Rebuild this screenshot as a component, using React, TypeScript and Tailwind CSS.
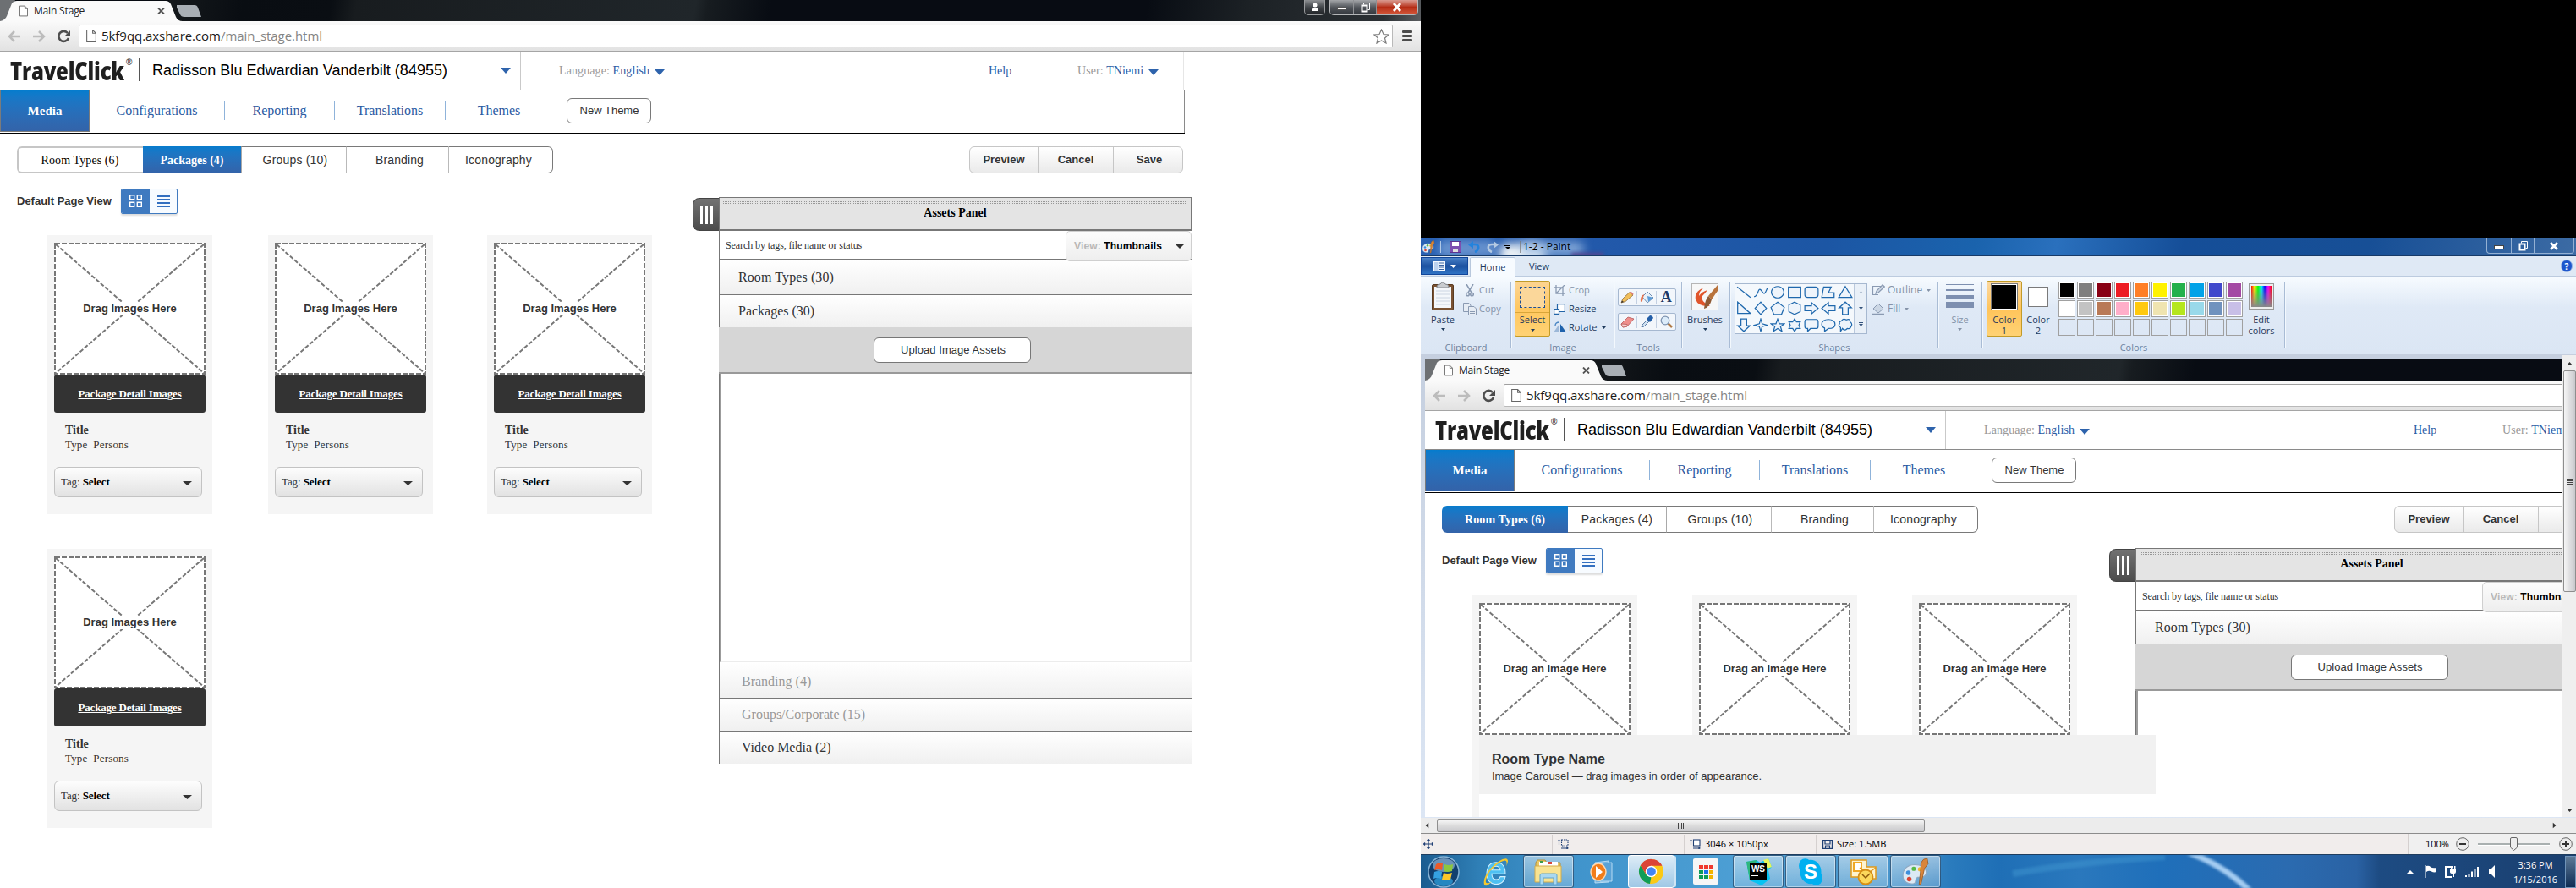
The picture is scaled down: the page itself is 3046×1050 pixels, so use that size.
import type { ReactNode } from 'react';

const serif = "font-['Liberation_Serif',serif]";
const arial = "font-['Liberation_Sans',sans-serif]";
const ui = "font-['Open_Sans',sans-serif]";

function Down({ className }: { className: string }) {
  return (
    <svg viewBox="0 0 10 6" preserveAspectRatio="none" className={`shrink-0 ${className}`}>
      <path d="M0 0H10L5 6Z" fill="currentColor" />
    </svg>
  );
}

function PageIcon({ className }: { className: string }) {
  return (
    <svg viewBox="0 0 11 14" className={className} fill="#fff" stroke="#666" strokeWidth="1">
      <path d="M.5.5H7L10.500 4V13.500H.5Z" />
      <path d="M7 .5V4H10.500" fill="none" />
    </svg>
  );
}

/* ---------- Browser window ---------- */

function WindowButtons() {
  return (
    <div className="absolute left-[1542px] top-0 flex gap-[5px]">
      <div className="flex h-[18px] w-[25px] items-center justify-center rounded-b-[5px] border border-t-0 border-[#9a9c9e] bg-linear-to-b from-[#8d9093] via-[#43474b] via-50% to-[#202327]">
        <svg width="12" height="11" viewBox="0 0 12 11" fill="#fff">
          <circle cx="6" cy="3" r="2.500" />
          <path d="M2 10V8Q2 6 4.500 6H7.500Q10 6 10 8V10Z" />
        </svg>
      </div>
      <div className="flex h-[18px] w-[105px] overflow-hidden rounded-b-[5px] border border-t-0 border-[#b4b6b8]">
        <div className="flex w-[28px] items-end justify-center border-r border-[#8e9093] bg-linear-to-b from-[#a4a6a9] via-[#54585d] via-50% to-[#33373d] pb-[5px]">
          <div className="h-1 w-[11px] border border-[#555] bg-white" />
        </div>
        <div className="flex w-[27px] items-center justify-center border-r border-[#8e9093] bg-linear-to-b from-[#a4a6a9] via-[#54585d] via-50% to-[#33373d]">
          <svg width="13" height="12" viewBox="0 0 13 12" fill="none" stroke="#fff">
            <path d="M4.500 2.500V.5H11.500V8.500H9.500" />
            <rect x="2.500" y="3.500" width="6" height="7" strokeWidth="2" />
          </svg>
        </div>
        <div className="flex flex-1 items-center justify-center bg-linear-to-b from-[#d99a90] via-[#b52c14] via-50% to-[#d4573a]">
          <svg width="14" height="11" viewBox="0 0 14 11" stroke="#fff" strokeWidth="2.800">
            <path d="M3 1L11 10M11 1L3 10" />
          </svg>
        </div>
      </div>
    </div>
  );
}

function BrowserChrome() {
  return (
    <>
      <div className="relative h-[25px] w-[1680px] bg-[#070b11]">
        <div className="absolute inset-y-0 left-[200px] right-0 bg-[linear-gradient(100deg,#15191c_0%,#090d12_6%,#0a0e13_13%,#181c1f_15%,#20262a_42%,#171c20_43%,#080c13_48%,#080c13_78%,#1c2125_86%,#2b3034_97%,#5a5d60_100%)]" />
        <svg width="250" height="25" viewBox="0 0 250 25" className="absolute left-0 top-0">
          <path d="M0 0H18L8 20Q6 25 0 25Z" fill="#6d7073" />
          <path d="M0 25Q6 24 8 19L14 4Q16 1 20 1H196Q200 1 202 5L208 20Q210 25 216 25Z" fill="#fafafa" />
          <path d="M209 6H230Q233 6 234 9L238 20H218Q214 20 213 17L209 9Z" fill="#a9afb5" />
        </svg>
        <div className="relative flex h-[25px] items-center pl-[23px]">
          <PageIcon className="h-[14px] w-[10px]" />
          <span className={`${ui} ml-[7px] text-[12px] tracking-[-0.17px] text-[#222]`}>Main Stage</span>
          <svg width="9" height="8" viewBox="0 0 9 8" className="ml-[86px]" stroke="#555" strokeWidth="1.800">
            <path d="M1 .5L8 7.500M8 .5L1 7.500" />
          </svg>
        </div>
        <WindowButtons />
      </div>
      <div className="flex h-[36px] w-[1680px] items-center border-b border-[#a5a5a5] bg-linear-to-b from-[#fafafa] to-[#e2e2e2]">
        <svg width="76" height="18" viewBox="0 0 76 18" className="ml-[9px] mr-[8px]" fill="none">
          <path d="M15 9H2M8 3L2 9L8 15" stroke="#bcbcbc" strokeWidth="2.500" />
          <path d="M30 9H43M37 3L43 9L37 15" stroke="#bcbcbc" strokeWidth="2.500" />
          <path d="M71 5A6 6 0 1 0 72 11" stroke="#4d4d4d" strokeWidth="2.600" />
          <path d="M74 2V9H67Z" fill="#4d4d4d" />
        </svg>
        <div className="flex h-[27px] w-[1554px] items-center rounded-[2px] border border-[#b9b9b9] border-t-[#9f9f9f] bg-white pl-[8px] pr-[3px]">
          <PageIcon className="h-[15px] w-[12px]" />
          <span className={`${ui} ml-[6px] flex-1 text-[15px] tracking-[-0.05px] text-[#858585]`}>
            <span className="text-[#1a1a1a]">5kf9qq.axshare.com</span>/main_stage.html
          </span>
          <svg width="19" height="18" viewBox="0 0 19 18" fill="#fff" stroke="#7d7d7d" strokeWidth="1.200">
            <path d="M9.500 1L12 6.500L18 7L13.500 11L15 17L9.500 14L4 17L5.500 11L1 7L7 6.500Z" />
          </svg>
        </div>
        <div className="ml-[11px] flex flex-col gap-[2px]">
          <div className="h-[3px] w-[12px] rounded-[1px] bg-[#4c4c4c]" />
          <div className="h-[3px] w-[12px] rounded-[1px] bg-[#4c4c4c]" />
          <div className="h-[3px] w-[12px] rounded-[1px] bg-[#4c4c4c]" />
        </div>
      </div>
    </>
  );
}

/* ---------- Site header and navigation ---------- */

function SiteHeader() {
  return (
    <div className="flex h-[46px] w-[1400px] items-center border-b border-r border-b-[#8a8a8a] border-r-[#e6e6e6] bg-white">
      <div className={`${ui} ml-[12px] w-[138px] origin-left scale-x-[.8] text-[30px] leading-[45px] font-extrabold tracking-[-0.3px] whitespace-nowrap text-[#1f1f1f]`}>
        TravelClick
      </div>
      <span className={`${arial} -mt-[20px] -ml-[1px] w-[8px] text-[10px] font-bold text-[#333]`}>®</span>
      <div className="-mt-[3px] ml-[7px] h-[27px] w-px bg-[#555]" />
      <div className={`${arial} ml-[15px] w-[400px] text-[18px] tracking-[0.03px] whitespace-nowrap text-black`}>
        Radisson Blu Edwardian Vanderbilt (84955)
      </div>
      <div className="flex h-[45px] w-[36px] items-center justify-center border-x border-[#c9c9c9] text-[#2e63ac]">
        <Down className="h-[7px] w-[12px]" />
      </div>
      <div className={`${serif} ml-[45px] flex w-[508px] items-center text-[14px] tracking-[0.1px]`}>
        <span className="whitespace-pre text-[#999]">Language: </span>
        <span className="text-[#2c5ba3]">English</span>
        <Down className="mt-[3px] ml-[6px] h-[7px] w-[12px] text-[#2e63ac]" />
      </div>
      <span className={`${serif} w-[105px] text-[14px] text-[#2c5ba3]`}>Help</span>
      <div className={`${serif} flex items-center text-[14px] tracking-[0.07px]`}>
        <span className="whitespace-pre text-[#999]">User: </span>
        <span className="text-[#2c5ba3]">TNiemi</span>
        <Down className="mt-[3px] ml-[6px] h-[7px] w-[12px] text-[#2e63ac]" />
      </div>
    </div>
  );
}

function MainNav() {
  return (
    <div className="flex h-[51px] w-[1401px] border-b border-black bg-white">
      <div className={`${serif} flex h-[50px] w-[1401px] items-center border-r border-[#8a8a8a] pb-[3px] text-[16px] text-[#2c5ba3]`}>
        <div className="flex h-[49px] w-[106px] items-center justify-center self-start border border-t-0 border-[#7b7b7b] bg-linear-to-b from-[#057ccd] to-[#3363a9] text-[15px] font-bold text-white">
          Media
        </div>
        <div className="flex h-[23px] w-[160px] items-center justify-center border-r border-[#8fb3da]">Configurations</div>
        <div className="flex h-[23px] w-[130px] items-center justify-center border-r border-[#8fb3da]">Reporting</div>
        <div className="flex h-[23px] w-[131px] items-center justify-center border-r border-[#8fb3da]">Translations</div>
        <div className="flex h-[23px] w-[126px] items-center justify-center">Themes</div>
        <div className={`${arial} ml-[17px] flex h-[30px] w-[100px] items-center justify-center rounded-[6px] border border-[#797979] pl-px text-[13px] text-[#333]`}>
          New Theme
        </div>
      </div>
    </div>
  );
}

function Toolbar({ active }: { active: 'rooms' | 'packages' }) {
  const rooms = active === 'rooms';
  return (
    <div className="flex h-[64px] w-[1400px] items-start pt-[15px] pl-[20px]">
      <div className={`${arial} flex h-[32px] w-[634px] text-[14px] text-[#333]`}>
        {rooms ? (
          <div className={`${serif} flex w-[149px] items-center justify-center rounded-l-[6px] bg-linear-to-b from-[#057ccd] to-[#3363a9] text-[14px] font-bold tracking-[0.1px] text-white`}>
            Room Types (6)
          </div>
        ) : (
          <div className={`${serif} flex w-[149px] items-center justify-center rounded-l-[6px] border-y-2 border-l-2 border-[#c6c6c6] pr-[2px] text-[14px] tracking-[0.1px] text-black`}>
            Room Types (6)
          </div>
        )}
        {rooms ? (
          <div className="flex w-[116px] items-center justify-center border-y border-y-[#797979] tracking-[0.15px]">Packages (4)</div>
        ) : (
          <div className={`${serif} flex w-[116px] items-center justify-center bg-linear-to-b from-[#057ccd] to-[#3363a9] text-[14px] font-bold text-white`}>
            Packages (4)
          </div>
        )}
        <div className="flex w-[124px] items-center justify-center border-y border-l border-y-[#797979] border-l-[#a9a9a9] pl-[3px] tracking-[0.2px]">Groups (10)</div>
        <div className="flex w-[121px] items-center justify-center border-y border-l border-y-[#797979] border-l-[#b9b9b9] pl-[5px] tracking-[0.12px]">Branding</div>
        <div className="flex w-[124px] items-center justify-center rounded-r-[6px] border border-[#797979] border-l-[#b9b9b9] pr-[5px] tracking-[0.18px]">Iconography</div>
      </div>
      <div className={`${arial} ml-[492px] flex h-[32px] w-[253px] rounded-[6px] border-[1.500px] border-[#c6c6c6] bg-linear-to-b from-white to-[#eaeaea] text-[13px] font-bold text-[#333]`}>
        <div className="flex w-[81px] items-center justify-center border-r border-[#c6c6c6]">Preview</div>
        <div className="flex w-[89px] items-center justify-center border-r border-[#c6c6c6]">Cancel</div>
        <div className="flex flex-1 items-center justify-center pl-[3px]">Save</div>
      </div>
    </div>
  );
}

function ViewToggle() {
  return (
    <div className="flex h-[31px] items-center pl-[20px]">
      <span className={`${arial} w-[123px] text-[13px] font-bold text-[#333]`}>Default Page View</span>
      <div className="flex h-[30px] w-[67px] overflow-hidden rounded-[2px] border border-[#3f7ac0] bg-[#f7fbff] shadow-[0_2px_2px_#ddd]">
        <div className="flex w-[33px] items-center justify-center bg-[#3f7ac0]">
          <svg width="15" height="15" viewBox="0 0 15 15" fill="none" stroke="#fff" strokeWidth="1.400">
            <path d="M.7.7H5.700V5.700H.7ZM9.300.7H14.300V5.700H9.300ZM.7 9.300H5.700V14.300H.7ZM9.300 9.300H14.300V14.300H9.300Z" />
          </svg>
        </div>
        <div className="flex flex-1 items-center justify-center">
          <svg width="15" height="15" viewBox="0 0 15 15" stroke="#3470c0" strokeWidth="2">
            <path d="M0 2H15M0 6H15M0 10H15M0 14H15" />
          </svg>
        </div>
      </div>
    </div>
  );
}

/* ---------- Cards ---------- */

function DropZone({ label }: { label: string }) {
  return (
    <div className={`${arial} relative grid h-[156px] w-[179px] place-items-center bg-white`}>
      <svg width="179" height="156" viewBox="0 0 179 156" className="col-start-1 row-start-1" stroke="#777" fill="none">
        <rect x="1" y="1" width="177" height="154" strokeWidth="2" strokeDasharray="6 2" shapeRendering="crispEdges" />
        <path d="M2 2L177 154M177 2L2 154" strokeWidth="2" strokeDasharray="5 2" />
      </svg>
      <span className="relative col-start-1 row-start-1 bg-white px-[2px] text-[13px] leading-4 font-bold text-[#333]">{label}</span>
    </div>
  );
}

function PackageCard() {
  return (
    <div className="h-[330px] w-[195px] bg-[#f5f5f5] px-[8px] pt-[9px]">
      <DropZone label="Drag Images Here" />
      <div className={`${serif} flex h-[45px] w-[179px] items-center justify-center rounded-[3px] bg-[#333] text-[13px] font-bold tracking-[-0.17px] text-white underline`}>
        Package Detail Images
      </div>
      <div className={`${serif} px-[13px] pt-[12px] text-[#333]`}>
        <div className="text-[14px] leading-[17px] font-bold">Title</div>
        <div className="text-[13px] leading-[17px] tracking-[0.17px] whitespace-pre">Type  Persons</div>
      </div>
      <div className={`${serif} mt-[18px] flex h-[36px] w-[175px] items-center rounded-[6px] border-[1.500px] border-[#c3c3c3] bg-linear-to-b from-[#fdfdfd] to-[#e2e2e2] pl-[7px] text-[13px] tracking-[-0.09px] text-[#333]`}>
        <span className="flex-1">
          Tag: <b className="text-black">Select</b>
        </span>
        <Down className="mt-[2px] mr-[11px] h-[5px] w-[11px]" />
      </div>
    </div>
  );
}

/* ---------- Assets panel ---------- */

function AssetRow({ label, muted, className }: { label: string; muted?: boolean; className: string }) {
  return (
    <div className={`${serif} flex items-center bg-linear-to-b from-white to-[#f0f0f0] text-[16px] ${muted ? 'text-[#999]' : 'text-[#333]'} ${className}`}>
      {label}
    </div>
  );
}

function AssetsPanel({ full }: { full: boolean }) {
  return (
    <div className="flex">
      <div className="mt-px flex h-[39px] w-[31px] items-center justify-center gap-[3px] rounded-l-[8px] border border-r-0 border-[#444] bg-linear-to-b from-[#727272] to-[#4c4c4c]">
        <div className="h-[22px] w-[3px] bg-white" />
        <div className="h-[22px] w-[3px] bg-white" />
        <div className="h-[22px] w-[3px] bg-white" />
      </div>
      <div className="w-[559px] border-l border-[#777]">
        <div className={`${serif} flex h-[40px] flex-col items-center border-t border-r border-b-2 border-[#777] bg-[#e4e4e4] text-[14px] font-bold text-black`}>
          <div className="mt-[4px] mb-px h-[3px] w-[550px] bg-[linear-gradient(transparent_1px,#e4e4e4_1px_2px,transparent_2px),repeating-linear-gradient(90deg,#979797_0_1px,transparent_1px_2px)]" />
          <div className="leading-[20px]">Assets Panel</div>
        </div>
        <div className="flex h-[34px] items-start border-b border-[#777] bg-white">
          <span className={`${serif} w-[409px] pl-[7px] text-[12px] leading-[34px] tracking-[-0.09px] text-[#333]`}>
            Search by tags, file name or status
          </span>
          <div className={`${arial} relative flex h-[36px] w-[149px] items-center rounded-[5px] border-[1.500px] border-[#cfcfcf] bg-linear-to-b from-[#fcfcfc] to-[#eeeeee] pl-[9px] text-[12px] font-bold tracking-[0.14px] text-[#b8b8b8]`}>
            <span className="flex-1">
              View: <span className="text-black">Thumbnails</span>
            </span>
            <Down className="mr-[8px] h-[5px] w-[10px] text-[#333]" />
          </div>
        </div>
        <AssetRow label="Room Types (30)" className={full ? 'h-[42px] border-b border-b-[#777] pl-[22px] tracking-[0.1px]' : 'h-[40px] pl-[22px] tracking-[0.1px]'} />
        {full && <AssetRow label="Packages (30)" className="h-[38px] pl-[22px]" />}
        <div className="-ml-px flex h-[55px] justify-center border-b-2 border-[#999] bg-[#d6d6d6] pt-[12px]">
          <div className={`${arial} flex h-[30px] w-[186px] items-center justify-center rounded-[6px] border border-[#777] bg-white pl-[2px] text-[13px] tracking-[0.06px] text-[#333] ${full ? '-ml-[7px]' : '-ml-[6px]'}`}>
            Upload Image Assets
          </div>
        </div>
        <div className="h-[341px] border-r-2 border-b-2 border-l-2 border-[#ececec] border-l-[#9c9c9c] bg-white" />
        {full && (
          <>
            <AssetRow muted label="Branding (4)" className="h-[43px] border-b border-b-[#777] pt-[4px] pl-[26px]" />
            <AssetRow muted label="Groups/Corporate (15)" className="h-[39px] border-b border-b-[#777] pl-[26px]" />
            <AssetRow label="Video Media (2)" className="h-[38px] pl-[26px]" />
          </>
        )}
      </div>
    </div>
  );
}

function PackagesPage() {
  return (
    <div className="h-[1050px] w-[1680px] overflow-hidden bg-white">
      <BrowserChrome />
      <SiteHeader />
      <MainNav />
      <Toolbar active="packages" />
      <div className="flex">
        <div className="w-[819px]">
          <ViewToggle />
          <div className="mt-[25px] grid grid-cols-[261px_259px_195px] gap-y-[41px] pl-[56px]">
            <PackageCard />
            <PackageCard />
            <PackageCard />
            <PackageCard />
          </div>
        </div>
        <div className="pt-[11px]">
          <AssetsPanel full />
        </div>
      </div>
    </div>
  );
}

function RoomTypesPage() {
  return (
    <div className="h-[541px] w-[1344px] overflow-hidden bg-white">
      <div className="w-[1680px]">
        <BrowserChrome />
        <SiteHeader />
        <MainNav />
        <Toolbar active="rooms" />
        <div className="flex">
          <div className="w-[809px]">
            <ViewToggle />
            <div className="mt-[25px] flex gap-[65px] pl-[56px]">
              <div className="h-[300px] w-[195px] bg-[#f5f5f5] px-[8px] pt-[10px]"><DropZone label="Drag an Image Here" /></div>
              <div className="h-[300px] w-[195px] bg-[#f5f5f5] px-[8px] pt-[10px]"><DropZone label="Drag an Image Here" /></div>
              <div className="h-[300px] w-[195px] bg-[#f5f5f5] px-[8px] pt-[10px]"><DropZone label="Drag an Image Here" /></div>
            </div>
            <div className={`${arial} relative -mt-[134px] ml-[64px] h-[140px] w-[1260px] bg-white text-[#333]`}>
              <div className="h-[70px] w-[800px] bg-[#f1f1f1] pt-[19px] pl-[15px]">
                <div className="text-[16px] leading-[20px] font-bold">Room Type Name</div>
                <div className="text-[13px] leading-[20px] tracking-[-0.05px]">Image Carousel — drag images in order of appearance.</div>
              </div>
            </div>
          </div>
          <div className="pt-px">
            <AssetsPanel full={false} />
          </div>
        </div>
      </div>
    </div>
  );
}

/* ---------- Paint ---------- */

function PaletteIcon({ className }: { className: string }) {
  return (
    <svg viewBox="0 0 32 32" className={className}>
      <path d="M15 8C6 8 2 14 2 20C2 27 8 30 14 29C18 28 14 24 18 22C22 21 27 23 28 17C28 11 22 8 15 8Z" fill="#dce9f4" stroke="#8fa9c2" />
      <circle cx="8" cy="17" r="2.600" fill="#3f8fdc" />
      <circle cx="14" cy="12.500" r="2.400" fill="#57b847" />
      <circle cx="21" cy="13" r="2.400" fill="#f2b632" />
      <circle cx="9" cy="24" r="2.600" fill="#dd4433" />
      <path d="M25 2L29 1L30 7L26 12L22 30L20 30L22 11L22 6Z" fill="#d9853a" stroke="#9a5a22" strokeWidth=".8" />
    </svg>
  );
}

function TitleBar() {
  return (
    <div className="relative flex h-[21px] items-center overflow-hidden border-b border-[#173a68] bg-[linear-gradient(100deg,#2a62b4_0%,#2359ab_12%,#1c56a4_35%,#1a63ad_48%,#2a70bd_55%,#154e98_66%,#174f96_82%,#3c6ba4_100%)]">
      <div className="absolute left-[92px] top-[6px] h-6 w-[56px] rounded-full bg-[#eef3f6] blur-[6px]" />
      <div className="absolute left-[20px] top-[2px] h-5 w-[70px] rounded-full bg-[#8db0e0]/60 blur-[5px]" />
      <div className="absolute left-[118px] top-[4px] h-4 w-[75px] rounded-full bg-[#9bbce3]/80 blur-[6px]" />
      <div className="absolute left-[178px] top-[17px] h-2 w-[38px] bg-[#55458f] blur-[2px]" />
      <div className="absolute inset-x-0 bottom-0 h-px bg-[#8fb3dd]" />
      <PaletteIcon className="relative ml-px h-[16px] w-[16px]" />
      <div className="relative ml-[6px] h-[14px] w-px bg-[#dce8f5]/70" />
      <svg viewBox="0 0 14 14" className="relative ml-[10px] h-[14px] w-[14px]">
        <path d="M.5.5H13.500V13.500H.5Z" fill="#7d4fb0" stroke="#5b3590" />
        <path d="M3 1H11V6H3Z" fill="#fff" />
        <path d="M4 9H10V13H4Z" fill="#ddd" />
      </svg>
      <svg viewBox="0 0 38 14" className="relative ml-[8px] h-[14px] w-[38px]" fill="none" strokeWidth="2.600">
        <path d="M4 4H8Q13 4 12 9Q11 12 8 13" stroke="#2383dd" />
        <path d="M6 0L0 4.500L6 9Z" fill="#2383dd" />
        <path d="M32 4H28Q23 4 24 9Q25 12 28 13" stroke="#b4c9e2" />
        <path d="M30 0L36 4.500L30 9Z" fill="#b4c9e2" />
      </svg>
      <div className="relative ml-[5px] flex flex-col items-center gap-px text-black">
        <div className="h-px w-[7px] bg-black" />
        <Down className="h-[3px] w-[6px]" />
      </div>
      <div className="relative ml-[11px] h-[14px] w-px bg-[#777]/70" />
      <span className={`${ui} relative ml-[3px] text-[12px] leading-[20px] text-black`}>1-2 - Paint</span>
      <div className="absolute right-[2px] top-0 flex h-[18px] w-[104px] rounded-b-[4px] border border-t-0 border-[#93b0d3]">
        <div className="flex w-[29px] items-end justify-center border-r border-[#93b0d3] pb-[4px]">
          <div className="h-[5px] w-[12px] border border-[#444] bg-white" />
        </div>
        <div className="flex w-[27px] items-center justify-center border-r border-[#93b0d3]">
          <svg width="13" height="12" viewBox="0 0 13 12" fill="none" stroke="#fff">
            <path d="M4.500 2.500V.5H11.500V8.500H9.500" />
            <rect x="2.500" y="3.500" width="6" height="7" strokeWidth="2" />
          </svg>
        </div>
        <div className="flex flex-1 items-center justify-center">
          <svg width="12" height="10" viewBox="0 0 12 10" stroke="#fff" strokeWidth="2.600">
            <path d="M2 1L10 9M10 1L2 9" />
          </svg>
        </div>
      </div>
    </div>
  );
}

function RibbonTabs() {
  return (
    <div className={`${ui} flex h-[24px] items-end border-b border-[#bccbdf] bg-[#dfe9f5] text-[11px] text-[#1e395b]`}>
      <div className="mb-px flex h-[21px] w-[56px] items-center justify-center gap-[6px] border border-[#12469a] bg-linear-to-b from-[#4a82c8] via-[#1c51a0] via-50% to-[#2f73c4] text-white">
        <svg width="14" height="12" viewBox="0 0 14 12">
          <rect width="14" height="12" fill="#f3f8ff" />
          <path d="M7 2H13M7 4.500H13M7 7H13M7 9.500H13" stroke="#3b64a2" strokeWidth="1.200" />
          <rect x="1" y="1" width="4.500" height="10" fill="#bcd2ef" />
        </svg>
        <Down className="h-[4px] w-[7px]" />
      </div>
      <div className="-mb-px ml-[2px] flex h-[23px] w-[54px] items-center justify-center rounded-t-[2px] border border-b-0 border-[#b8c8dd] bg-[#f7fbff] tracking-[-0.2px]">Home</div>
      <div className="ml-[16px] flex h-[22px] items-center">View</div>
      <div className="mr-[4px] mb-[4px] ml-auto flex h-[15px] w-[14px] items-center justify-center rounded-full border border-[#9bb9e8] bg-[#1d56cc] text-[10px] leading-none font-bold text-white">?</div>
    </div>
  );
}

function Group({ label, className, children }: { label?: string; className: string; children?: ReactNode }) {
  return (
    <div className={`relative flex h-[84px] flex-col justify-between ${className}`}>
      <div className="flex h-[66px] items-start">{children}</div>
      <div className="flex h-[12px] items-center justify-center leading-none text-[#6f83a0]">{label}</div>
      <div className="absolute right-0 top-[2px] h-[77px] w-px bg-[#a9bcd5] shadow-[1px_0_0_#f3f8fd]" />
    </div>
  );
}

function SmallItem({ icon, label, arrow, dim }: { icon: ReactNode; label: string; arrow?: boolean; dim?: boolean }) {
  return (
    <div className={`flex h-[22px] items-center ${dim ? 'text-[#8593a8]' : 'text-[#1e395b]'}`}>
      <div className="mr-[3px] flex w-[16px] justify-center">{icon}</div>
      {label}
      {arrow && <Down className="ml-[5px] h-[3px] w-[5px]" />}
    </div>
  );
}

const shapePaths = [
  'M1 2L15 13', 'M1 12C5 13 5 2 8 5S11 13 15 3', 'M8 1.500A6.500 6 0 1 0 8.010 1.500Z', 'M1.500 2H14.500V13H1.500Z', 'M4 2H12Q15 2 15 5V10Q15 13 12 13H4Q1 13 1 10V5Q1 2 4 2Z', 'M3 2H11L8 8H14V13H1Z', 'M8 1.500L15 13H1Z',
  'M1.500 1V13H15Z', 'M8 1L14 7.500L8 14L2 7.500Z', 'M8 1L15 6.500L12 14H4L1 6.500Z', 'M8 1L14 4V11L8 14L2 11V4Z', 'M1 5H8V1.500L15 7.500L8 13.500V10H1Z', 'M15 5H8V1.500L1 7.500L8 13.500V10H15Z', 'M5 14V7H1.500L8 1L14.500 7H11V14Z',
  'M5 1V8H1.500L8 14L14.500 8H11V1Z', 'M8 1L9.500 6L14.500 7.500L9.500 9L8 14L6.500 9L1.500 7.500L6.500 6Z', 'M8 1L9.800 6H15L11 9L12.500 14L8 11L3.500 14L5 9L1 6H6.200Z', 'M8 1L10 4H14L12.500 7.500L14 11H10L8 14L6 11H2L3.500 7.500L2 4H6Z', 'M3 1.500H13Q15 1.500 15 4V8.500Q15 11 13 11H7L4 14V11H3Q1 11 1 8.500V4Q1 1.500 3 1.500Z', 'M8 1.500C12 1.500 15 3.500 15 6.500S12 11 8 11L4 14V10.500C2 9.500 1 8 1 6.500C1 3.500 4 1.500 8 1.500Z', 'M4 3Q6 0 9 2Q13 0 13 4Q16 6 14 9Q13 12 10 11Q7 14 5 11L3 14V10Q0 8 2 6Q1 4 4 3Z',
];

const swatches = [
  'bg-black', 'bg-[#7f7f7f]', 'bg-[#880015]', 'bg-[#ed1c24]', 'bg-[#ff7f27]', 'bg-[#fff200]', 'bg-[#22b14c]', 'bg-[#00a2e8]', 'bg-[#3f48cc]', 'bg-[#a349a4]',
  'bg-white', 'bg-[#c3c3c3]', 'bg-[#b97a57]', 'bg-[#ffaec9]', 'bg-[#ffc90e]', 'bg-[#efe4b0]', 'bg-[#b5e61d]', 'bg-[#99d9ea]', 'bg-[#7092be]', 'bg-[#c8bfe7]',
  '', '', '', '', '', '', '', '', '', '',
];

function ToolStrip({ children }: { children: ReactNode }) {
  return <div className="flex h-[21px] w-[69px] items-center divide-x divide-[#c3d0e2] rounded-[2px] border border-[#a6b8d0] bg-[#f2f6fb]">{children}</div>;
}

function Ribbon() {
  return (
    <div className={`${ui} flex h-[92px] border-b border-[#93a5be] bg-linear-to-b from-[#f7fbff] via-[#dfe9f6] via-40% to-[#dbe6f4] pt-[5px] text-[11px] text-[#1e395b]`}>
      <Group label="Clipboard" className="w-[107px]">
        <div className="ml-[6px] flex w-[40px] flex-col items-center">
          <svg width="26" height="34" viewBox="0 0 26 34" className="mt-[2px]">
            <rect x=".5" y="2.500" width="25" height="30" rx="1.500" fill="#7a5232" stroke="#5a3b22" />
            <rect x="3" y="5" width="20" height="25" fill="#f4f7fb" />
            <path d="M5 10H21M5 14H21M5 18H21M5 22H21M5 26H21" stroke="#ccd5e2" />
            <path d="M6 5Q6 2 10 2Q11 0 13 0Q15 0 16 2Q20 2 20 5V6H6Z" fill="#c9ccd0" stroke="#84888e" />
          </svg>
          <span className="mt-[1px] leading-[17px]">Paste</span>
          <Down className="mt-[2px] h-[3px] w-[5px]" />
        </div>
        <div className="ml-[4px]">
          <SmallItem dim label="Cut" icon={<svg width="10" height="15" viewBox="0 0 10 15" fill="none" stroke="#8a9ab2" strokeWidth="1.500"><path d="M1 0L7 10M9 0L3 10" /><circle cx="2.500" cy="12" r="1.800" /><circle cx="7.500" cy="12" r="1.800" /></svg>} />
          <SmallItem dim label="Copy" icon={<svg width="16" height="15" viewBox="0 0 16 15" fill="#e6ecf4" stroke="#8a9ab2"><path d="M.5.5H7L9 3V10.500H.5Z" /><path d="M6.500 4.500H13L15.500 7V14.500H6.500Z" /><path d="M8 8.500H13M8 10.500H14M8 12.500H14" /></svg>} />
        </div>
      </Group>
      <Group label="Image" className="w-[122px]">
        <div className="ml-[4px] flex h-[66px] w-[42px] flex-col items-center rounded-[2px] border border-[#c29b29] bg-linear-to-b from-[#fcd491] via-[#ffc75f] via-50% to-[#ffd274]">
          <div className="flex h-[37px] w-full items-center justify-center border-b border-[#d9a63a]">
            <div className="h-[25px] w-[30px] border border-dashed border-[#1f4f93] bg-[#fbd79a]" />
          </div>
          <span className="leading-[16px]">Select</span>
          <Down className="mt-[3px] h-[3px] w-[5px]" />
        </div>
        <div className="ml-[3px]">
          <SmallItem dim label="Crop" icon={<svg width="14" height="13" viewBox="0 0 14 13" fill="none" stroke="#8a9ab2" strokeWidth="1.300"><path d="M3 0V10H14M0 3H11V13M3 10L13 0" /></svg>} />
          <SmallItem label="Resize" icon={<svg width="14" height="13" viewBox="0 0 14 13" fill="#fff" stroke="#2465a8" strokeWidth="1.200"><path d="M4.500.6H13.400V9.500H4.500Z" /><path d="M.6 6.500H6.500V12.400H.6Z" /></svg>} />
          <SmallItem arrow label="Rotate" icon={<svg width="15" height="14" viewBox="0 0 15 14"><path d="M7 3V13H0Z" fill="#9db8d8" /><path d="M8 3L15 13H8Z" fill="#1f62ac" /><path d="M2 5Q2 1 7 1" fill="none" stroke="#4a86c4" strokeWidth="1.300" /></svg>} />
        </div>
      </Group>
      <Group label="Tools" className="w-[80px]">
        <div className="mt-[9px] ml-[4px] flex flex-col gap-[8px]">
          <ToolStrip>
            <div className="flex w-[22px] justify-center"><svg width="16" height="15" viewBox="0 0 16 15"><path d="M1 14L3 9L11 1.500L15 5L6 12.500Z" fill="#f1bf5b" stroke="#8c6a3a" strokeWidth=".8" /><path d="M11 1.500L12.500.5L15.500 3.500L15 5Z" fill="#e07a7a" /><path d="M1 14L2 11.500L4 13Z" fill="#333" /></svg></div>
            <div className="flex w-[24px] justify-center"><svg width="17" height="16" viewBox="0 0 17 16"><path d="M3 7L9 1L16 8L9 14Z" fill="#e8f0f8" stroke="#6c8db4" /><path d="M9 6L16 8L10 13Z" fill="#5c9bd6" /><path d="M5 4Q0 6 1 13Q4 12 4 8Z" fill="#e5744f" /></svg></div>
            <div className={`${serif} flex w-[22px] justify-center text-[18px] leading-[19px] font-bold text-[#1b3a69]`}>A</div>
          </ToolStrip>
          <ToolStrip>
            <div className="flex w-[22px] justify-center"><svg width="17" height="14" viewBox="0 0 17 14" stroke="#b65a5a" strokeWidth=".8"><path d="M1 9L9 1L16 3L8 12L3 13Z" fill="#ee8f8c" /><path d="M1 9L8 9.500L8 12L3 13Z" fill="#f9d2cf" /></svg></div>
            <div className="flex w-[24px] justify-center"><svg width="15" height="15" viewBox="0 0 15 15"><path d="M1 14L2 11L8 5L10 7L4 13Z" fill="#cfe0f0" stroke="#5d7fa8" /><path d="M7 4L11 0Q14 0 15 3L11 8Z" fill="#235ea8" /></svg></div>
            <div className="flex w-[22px] justify-center"><svg width="15" height="15" viewBox="0 0 15 15"><path d="M9 9L14 14" stroke="#b07a45" strokeWidth="2.500" /><circle cx="6" cy="6" r="4.800" fill="#dcecfa" stroke="#7d93b0" strokeWidth="1.300" /></svg></div>
          </ToolStrip>
        </div>
      </Group>
      <Group className="w-[57px]">
        <div className="ml-[4px] flex w-[46px] flex-col items-center">
          <svg width="32" height="32" viewBox="0 0 32 32" className="mt-[3px]">
            <rect x=".5" y=".5" width="31" height="31" fill="#f7f7f7" stroke="#b5b5b5" />
            <path d="M15 5Q3 10 5 19Q8 28 22 27Q10 21 13 15Q16 12 19 8Q12 10 9 15Q9 9 15 5Z" fill="#e0552b" />
            <path d="M31 2L31 9L24 19L20 15Z" fill="#b9733c" />
            <path d="M20 15L24 19Q22 28 15 30Q16 20 20 15Z" fill="#8f5a35" />
          </svg>
          <span className="mt-[2px] leading-[17px]">Brushes</span>
          <Down className="mt-[2px] h-[3px] w-[5px]" />
        </div>
      </Group>
      <Group label="Shapes" className="w-[246px]">
        <div className="mt-[3px] ml-[5px] flex h-[60px] w-[157px] border border-[#a6b8d0] bg-[#f4f8fc]">
          <div className="grid w-[140px] grid-cols-7">
            {shapePaths.map((d) => (
              <svg key={d} width="18" height="17" viewBox="0 0 16 15" className="m-[1px]" fill="#eef4fb" stroke="#1f68ad" strokeWidth="1.100">
                <path d={d} />
              </svg>
            ))}
          </div>
          <div className="flex flex-1 flex-col items-center justify-between border-l border-[#b9c8dc] bg-[#e9f0f8] py-[8px] text-[#33527b]">
            <Down className="h-[3px] w-[5px] rotate-180 opacity-40" />
            <Down className="h-[3px] w-[5px]" />
            <div className="flex flex-col items-center gap-px"><div className="h-px w-[5px] bg-[#33527b]" /><Down className="h-[3px] w-[5px]" /></div>
          </div>
        </div>
        <div className="ml-[5px] text-[12px]">
          <SmallItem dim arrow label="Outline" icon={<svg width="16" height="14" viewBox="0 0 16 14" fill="none" stroke="#8a9ab2" strokeWidth="1.200"><path d="M11 2.500H1.500V12.500H8" /><path d="M5 11L6 8L13 .8L15.300 3L8 10Z" fill="#cfd9e6" /></svg>} />
          <SmallItem dim arrow label="Fill" icon={<svg width="16" height="14" viewBox="0 0 16 14" fill="#cbd6e4" stroke="#8a9ab2"><path d="M2 7L8 1L14 7L8 12Z" /><path d="M1 13.500H15" strokeWidth="1.500" /></svg>} />
        </div>
      </Group>
      <Group className="w-[52px]">
        <div className="ml-[9px] flex w-[33px] flex-col items-center text-[#8593a8]">
          <div className="mt-[4px] h-px w-full bg-[#7d8fb0]" />
          <div className="mt-[5px] h-[2px] w-full bg-[#7d8fb0]" />
          <div className="mt-[5px] h-[4px] w-full bg-[#7d8fb0]" />
          <div className="mt-[4px] h-[7px] w-full bg-[#7d8fb0]" />
          <span className="mt-[5px] leading-[17px]">Size</span>
          <Down className="mt-[2px] h-[3px] w-[5px]" />
        </div>
      </Group>
      <Group label="Colors" className="w-[358px]">
        <div className="ml-[5px] flex h-[66px] w-[42px] flex-col items-center rounded-[2px] border border-[#c29b29] bg-linear-to-b from-[#fcd9a0] via-[#ffc45a] via-50% to-[#ffd274] pt-[2px] text-center leading-[13px]">
          <div className="mb-[4px] h-[32px] w-[32px] border border-[#7a7a7a] bg-black shadow-[inset_0_0_0_1px_#fff]" />
          Color<br />1
        </div>
        <div className="ml-[2px] flex w-[34px] flex-col items-center pt-[7px] text-center leading-[13px]">
          <div className="mb-[8px] h-[24px] w-[24px] border border-[#7a7a7a] bg-white" />
          Color<br />2
        </div>
        <div className="mt-px ml-[7px] grid grid-cols-[repeat(10,20px)] gap-[2px]">
          {swatches.map((c, i) => (
            <div key={i} className={`h-[20px] w-[20px] border border-[#a0a0a0] ${c} ${c ? 'shadow-[inset_0_0_0_1px_#fff]' : ''}`} />
          ))}
        </div>
        <div className="ml-[4px] flex w-[36px] flex-col items-center pt-[4px] text-center leading-[13px]">
          <div className="mb-[6px] h-[29px] w-[28px] border-2 border-[#eee] bg-[linear-gradient(transparent,#888),linear-gradient(90deg,red,#ff0,lime,cyan,blue,#f0f,red)] outline outline-[#999]" />
          Edit<br />colors
        </div>
      </Group>
    </div>
  );
}

function VerticalScrollbar() {
  return (
    <div className="-mt-[5px] flex h-[546px] w-[17px] flex-col items-center border-l border-[#dcdcdc] bg-[#efefef] text-[#333]">
      <Down className="mt-[8px] h-[4px] w-[7px] rotate-180" />
      <div className="mt-[6px] flex h-[262px] w-[15px] flex-col items-center justify-center gap-px rounded-[2px] border border-[#8e8e8e] bg-linear-to-r from-[#f5f5f5] to-[#c9c9cd]">
        <div className="h-px w-[7px] bg-[#444]" /><div className="h-px w-[7px] bg-[#444]" /><div className="h-px w-[7px] bg-[#444]" /><div className="h-px w-[7px] bg-[#444]" />
      </div>
      <Down className="mt-auto mb-[6px] h-[4px] w-[7px]" />
    </div>
  );
}

function HorizontalScrollbar() {
  return (
    <div className="flex h-[18px] items-center bg-[#ececec] text-[#333]">
      <Down className="ml-[4px] h-[4px] w-[7px] rotate-90" />
      <div className="ml-[8px] flex h-[15px] w-[577px] items-center justify-center gap-px rounded-[2px] border border-[#8e8e8e] bg-linear-to-b from-[#f5f5f5] via-[#dcdcdc] via-50% to-[#c9c9cd]">
        <div className="h-[7px] w-px bg-[#444]" /><div className="h-[7px] w-px bg-[#444]" /><div className="h-[7px] w-px bg-[#444]" /><div className="h-[7px] w-px bg-[#444]" />
      </div>
      <Down className="mr-[22px] ml-auto h-[4px] w-[7px] -rotate-90" />
    </div>
  );
}

function StatusBar() {
  return (
    <div className={`${ui} flex h-[25px] items-center border-t border-[#8c8c8c] bg-[#f1edec] text-[11px] text-black`}>
      <div className="flex h-[23px] w-[156px] items-center border-r border-[#d5d0cf] pl-[3px]">
        <svg width="12" height="12" viewBox="0 0 12 12" fill="none" stroke="#1f3f74" strokeWidth="1.200"><path d="M6 0V12M0 6H12M4.500 2L6 .5L7.500 2M4.500 10L6 11.500L7.500 10M2 4.500L.5 6L2 7.500M10 4.500L11.500 6L10 7.500" /></svg>
      </div>
      <div className="flex h-[23px] w-[156px] items-center border-r border-[#d5d0cf] pl-[6px]">
        <svg width="13" height="12" viewBox="0 0 13 12" fill="none" stroke="#1f3f74" strokeWidth="1.100"><path d="M1.500 1V7M.5 2.500L1.500 1L2.500 2.500M4 11H12M10.500 9.500L12 11L10.500 12" /><rect x="4.500" y="1" width="7.500" height="7" strokeDasharray="1.500 1" /></svg>
      </div>
      <div className="flex h-[23px] w-[156px] items-center gap-[5px] border-r border-[#d5d0cf] pl-[6px]">
        <svg width="13" height="12" viewBox="0 0 13 12" fill="none" stroke="#1f3f74" strokeWidth="1.100"><path d="M1.500 1V7M.5 2.500L1.500 1L2.500 2.500M4 11H12M10.500 9.500L12 11L10.500 12" /><rect x="4.500" y="1" width="7.500" height="7" fill="#fff" /></svg>
        3046 × 1050px
      </div>
      <div className="flex h-[23px] w-[156px] items-center gap-[5px] border-r border-[#d5d0cf] pl-[7px]">
        <svg width="12" height="11" viewBox="0 0 12 11" fill="none" stroke="#1f3f74" strokeWidth="1.200"><path d="M.6.6H11.400V10.400H.6ZM3 .6V5H9V.6M3.500 10V7H8.500V10" /></svg>
        Size: 1.5MB
      </div>
      <div className="ml-auto flex h-[24px] w-[199px] items-center border-l border-[#d5d0cf] bg-[#f0f0f0] pl-[20px]">
        <span className="w-[36px]">100%</span>
        <svg width="16" height="16" viewBox="0 0 16 16" fill="#ececec" stroke="#666"><circle cx="8" cy="8" r="7.300" /><path d="M4 8H12" stroke="#333" strokeWidth="2" /></svg>
        <div className="relative ml-[10px] h-[3px] w-[85px] border-t-2 border-[#a9b0b0] bg-white">
          <svg width="9" height="16" viewBox="0 0 9 16" className="absolute left-[38px] top-[-9px]" fill="#eee" stroke="#666"><path d="M.5 2Q.5.5 2 .5H7Q8.500.5 8.500 2V12L4.500 15.500L.5 12Z" /></svg>
        </div>
        <svg width="16" height="16" viewBox="0 0 16 16" className="ml-[11px]" fill="#ececec" stroke="#666"><circle cx="8" cy="8" r="7.300" /><path d="M4 8H12M8 4V12" stroke="#333" strokeWidth="2" /></svg>
      </div>
    </div>
  );
}

/* ---------- Taskbar ---------- */

function TaskSlot({ open, active, children }: { open?: boolean; active?: boolean; children: ReactNode }) {
  const look = active ? 'border border-white bg-linear-to-b from-[#e6f1f9]/95 to-[#a9cde8]/90 w-[55px] mr-[7px] shadow-[3px_0_0_-1px_#cfe5f4]' : open ? 'border border-[#12385c]/70 bg-linear-to-b from-white/50 to-white/20 shadow-[inset_0_0_0_1px_rgba(255,255,255,.45)] w-[60px] mr-[2px]' : 'w-[60px] mr-[2px]';
  return <div className={`flex h-[39px] items-center justify-center rounded-[3px] ${look}`}>{children}</div>;
}

function Taskbar() {
  return (
    <div className="relative flex h-[40px] items-center overflow-hidden border-t border-[#1f3d5e] bg-[linear-gradient(90deg,#1b5c90_0%,#2f7fb6_5%,#3f93cb_12%,#4d9fd4_28%,#4a97cd_40%,#2a7bbd_46%,#1f6fb6_50%,#2a78bd_57%,#1f6fba_64%,#2b6bb0_75%,#2a62a4_81%,#1d4b82_83%,#1a3f6f_100%)]">
      <svg width="1366" height="40" viewBox="0 0 1366 40" className="absolute left-0 top-0 blur-[1.500px]" fill="none">
        <path d="M905 -4Q950 12 982 44" stroke="#a5cdf2" strokeWidth="7" />
        <path d="M700 22Q780 8 880 2" stroke="#3f95cf" strokeWidth="8" opacity=".5" />
      </svg>
      <div className="relative flex items-center">
        <div className="flex w-[59px] justify-center pr-[5px]">
          <svg width="38" height="38" viewBox="0 0 38 38">
            <circle cx="19" cy="19" r="18" fill="#123f6e" stroke="#86b3d6" strokeWidth="1.500" />
            <ellipse cx="19" cy="11" rx="13" ry="8" fill="#7fa8cc" opacity=".8" />
            <ellipse cx="19" cy="30" rx="11" ry="6" fill="#2c9ad6" opacity=".8" />
            <path d="M10 10Q14 7 18 9L17 17Q13 15 8 17Z" fill="#ee5a28" />
            <path d="M20 10Q25 12 30 10L29 18Q23 20 19 18Z" fill="#8cc63f" />
            <path d="M8 19Q13 17 17 19L16 27Q12 25 7 27Z" fill="#35a1e2" />
            <path d="M19 20Q23 22 29 20L27 28Q22 30 17 28Z" fill="#fdc629" />
          </svg>
        </div>
        <TaskSlot>
          <svg width="34" height="36" viewBox="0 0 34 32" preserveAspectRatio="none" fill="none">
            <path fillRule="evenodd" d="M28 18H12Q12 24 17 24Q21 24 22 21H28Q26 29 17 29Q6 28 6 17Q7 6 17 6Q28 6 28 18ZM12 14H22Q21 10 17 10Q13 10 12 14Z" fill="#4fc0f2" stroke="#d4f1ff" strokeWidth="1" />
            <path d="M3 29Q1 22 11 12Q22 2 29 2Q33 3 29 10Q31 4 27 4Q19 6 10 15Q4 23 5 27Q8 29 12 26Q5 33 3 29Z" fill="#f7c82c" />
          </svg>
        </TaskSlot>
        <TaskSlot open>
          <svg width="34" height="32" viewBox="0 0 34 32">
            <path d="M2 5L4 2H13L15 5H31V27H2Z" fill="#e9c762" stroke="#b3903b" />
            <path d="M6 4H28V9H6Z" fill="#fff" /><path d="M7 3H11V6H7Z" fill="#3a9b4c" /><path d="M17 4H21V7H17Z" fill="#d7463b" />
            <path d="M1 9H32V28H1Z" fill="#f8e392" stroke="#d3ac4c" />
            <path d="M7 31V20Q7 18 9 18H25Q27 18 27 20V31H23V23H11V31Z" fill="#a9d8f1" stroke="#5fa3cc" />
          </svg>
        </TaskSlot>
        <TaskSlot>
          <svg width="30" height="28" viewBox="0 0 30 28">
            <path d="M8 3L24 1V26L8 27Z" fill="#74b4e0" stroke="#b7dcf4" /><path d="M14 4L28 3V25H14Z" fill="#5aa2d6" stroke="#b7dcf4" />
            <ellipse cx="12" cy="14" rx="9" ry="10" fill="#f27d1a" stroke="#ffd9b0" strokeWidth="1.500" /><path d="M9 7L17 14L9 21Z" fill="#fff" />
          </svg>
        </TaskSlot>
        <TaskSlot active>
          <svg width="31" height="31" viewBox="0 0 30 30">
            <circle cx="15" cy="15" r="14" fill="#fbc916" />
            <path d="M27.500 8.500H15L9 18L2.700 8.200A14 14 0 0 1 27.500 8.500Z" fill="#db4437" />
            <path d="M2.700 8.200L9.500 19L15 21L13.500 29A14 14 0 0 1 2.700 8.200Z" fill="#0f9d58" />
            <circle cx="15" cy="15" r="6.500" fill="#fff" /><circle cx="15" cy="15" r="5.200" fill="#4285f4" />
          </svg>
        </TaskSlot>
        <TaskSlot>
          <div className="grid h-[31px] w-[30px] grid-cols-[5px_5px_5px] place-content-center gap-[1px] gap-y-[2px] rounded-[2px] bg-[#f6f6f6]">
            <div className="h-[4px] bg-[#f03a2e]" /><div className="h-[4px] bg-[#f03a2e]" /><div className="h-[4px] bg-[#f03a2e]" />
            <div className="h-[4px] bg-[#0f9d58]" /><div className="h-[4px] bg-[#1a73e8]" /><div className="h-[4px] bg-[#f4b400]" />
            <div className="h-[4px] bg-[#0f9d58]" /><div className="h-[4px] bg-[#0f9d58]" /><div className="h-[4px] bg-[#f4b400]" />
          </div>
        </TaskSlot>
        <TaskSlot open>
          <div className="relative flex h-[32px] w-[32px] items-center justify-center">
            <svg width="32" height="32" viewBox="0 0 32 32" className="absolute inset-0"><path d="M2 4L14 2L18 5L28 0L32 10L28 14L30 24L20 32L6 26Z" fill="#07c3f2" /><path d="M2 4L14 2L10 20L6 26Z" fill="#2fb67c" /><path d="M22 2L28 0L32 10L27 12Z" fill="#e9f35b" /></svg>
            <div className={`${arial} relative h-[20px] w-[20px] bg-black pl-[2px] text-[10px] leading-[14px] font-bold tracking-[-0.3px] text-white`}>WS<div className="h-px w-[8px] bg-white" /></div>
          </div>
        </TaskSlot>
        <TaskSlot open>
          <div className={`${arial} relative flex h-[34px] w-[30px] items-center justify-center`}>
            <svg width="30" height="34" viewBox="0 0 30 30" preserveAspectRatio="none" className="absolute inset-0" fill="#00aff0"><circle cx="15" cy="15" r="12.500" /><circle cx="8.500" cy="8.500" r="7.500" /><circle cx="21.500" cy="21.500" r="7.500" /></svg>
            <span className="relative text-[24px] leading-none font-bold text-white">S</span>
          </div>
        </TaskSlot>
        <TaskSlot open>
          <svg width="32" height="32" viewBox="0 0 32 32">
            <path d="M2 2H20V10H31V24H12V22H2Z" fill="#fdf3cf" stroke="#e19a1b" strokeWidth="1.500" /><path d="M5 5H14V15H5Z" fill="#fff" stroke="#f0a826" strokeWidth="2" />
            <path d="M12 11L21 18L31 11" fill="none" stroke="#e19a1b" strokeWidth="1.500" />
            <circle cx="19" cy="22" r="8.500" fill="#fbd85b" stroke="#d58f17" strokeWidth="1.800" /><path d="M15 19L19 23L24 18" fill="none" stroke="#8c5a0b" strokeWidth="1.500" />
          </svg>
        </TaskSlot>
        <TaskSlot open><PaletteIcon className="h-[34px] w-[34px]" /></TaskSlot>
      </div>
      <div className={`${ui} relative ml-auto flex h-full items-center text-[11px] text-white`}>
        <Down className="h-[4px] w-[8px] rotate-180" />
        <svg width="86" height="17" viewBox="0 0 86 17" className="ml-[12px]" fill="#fff">
          <path d="M1 1H2.500V16H1ZM3 2Q6 1 8 3T15 4V9Q12 10 9 8.500T3 9Z" />
          <path d="M25 2H35V4H27V14H33V16H25Z" /><path d="M31 5H38V9Q38 11 36 11V15H34V11Q31 11 31 9ZM32 2H33.500V5H32ZM36 2H37.500V5H36Z" />
          <path d="M49 13H51V15H49ZM52.500 11H54.500V15H52.500ZM56 8.500H58V15H56ZM59.500 6H61.500V15H59.500ZM63 3H65V15H63Z" />
          <path d="M77 5H80L84 1V16L80 12H77Z" />
        </svg>
        <div className="ml-[17px] w-[58px] text-center leading-[17px]">3:36 PM<br />1/15/2016</div>
        <div className="ml-[6px] h-[38px] w-[13px] border border-[#6f93b8] bg-linear-to-b from-[#5e7a97] to-[#0d2c54]" />
      </div>
    </div>
  );
}

function PaintScreen() {
  return (
    <div className="flex w-[1366px] flex-col bg-[#c5cfdf]">
      <div className="h-[282px] bg-black" />
      <TitleBar />
      <RibbonTabs />
      <Ribbon />
      <div className="flex h-[548px] bg-linear-to-b from-[#c5cfdf] to-[#dce6f4] pt-[6px] pl-[5px]">
        <RoomTypesPage />
        <VerticalScrollbar />
      </div>
      <HorizontalScrollbar />
      <StatusBar />
      <Taskbar />
    </div>
  );
}

export default function App() {
  return (
    <div className="flex h-[1050px] w-[3046px] overflow-hidden bg-white">
      <div className="w-[1680px] shrink-0">
        <PackagesPage />
      </div>
      <PaintScreen />
    </div>
  );
}
